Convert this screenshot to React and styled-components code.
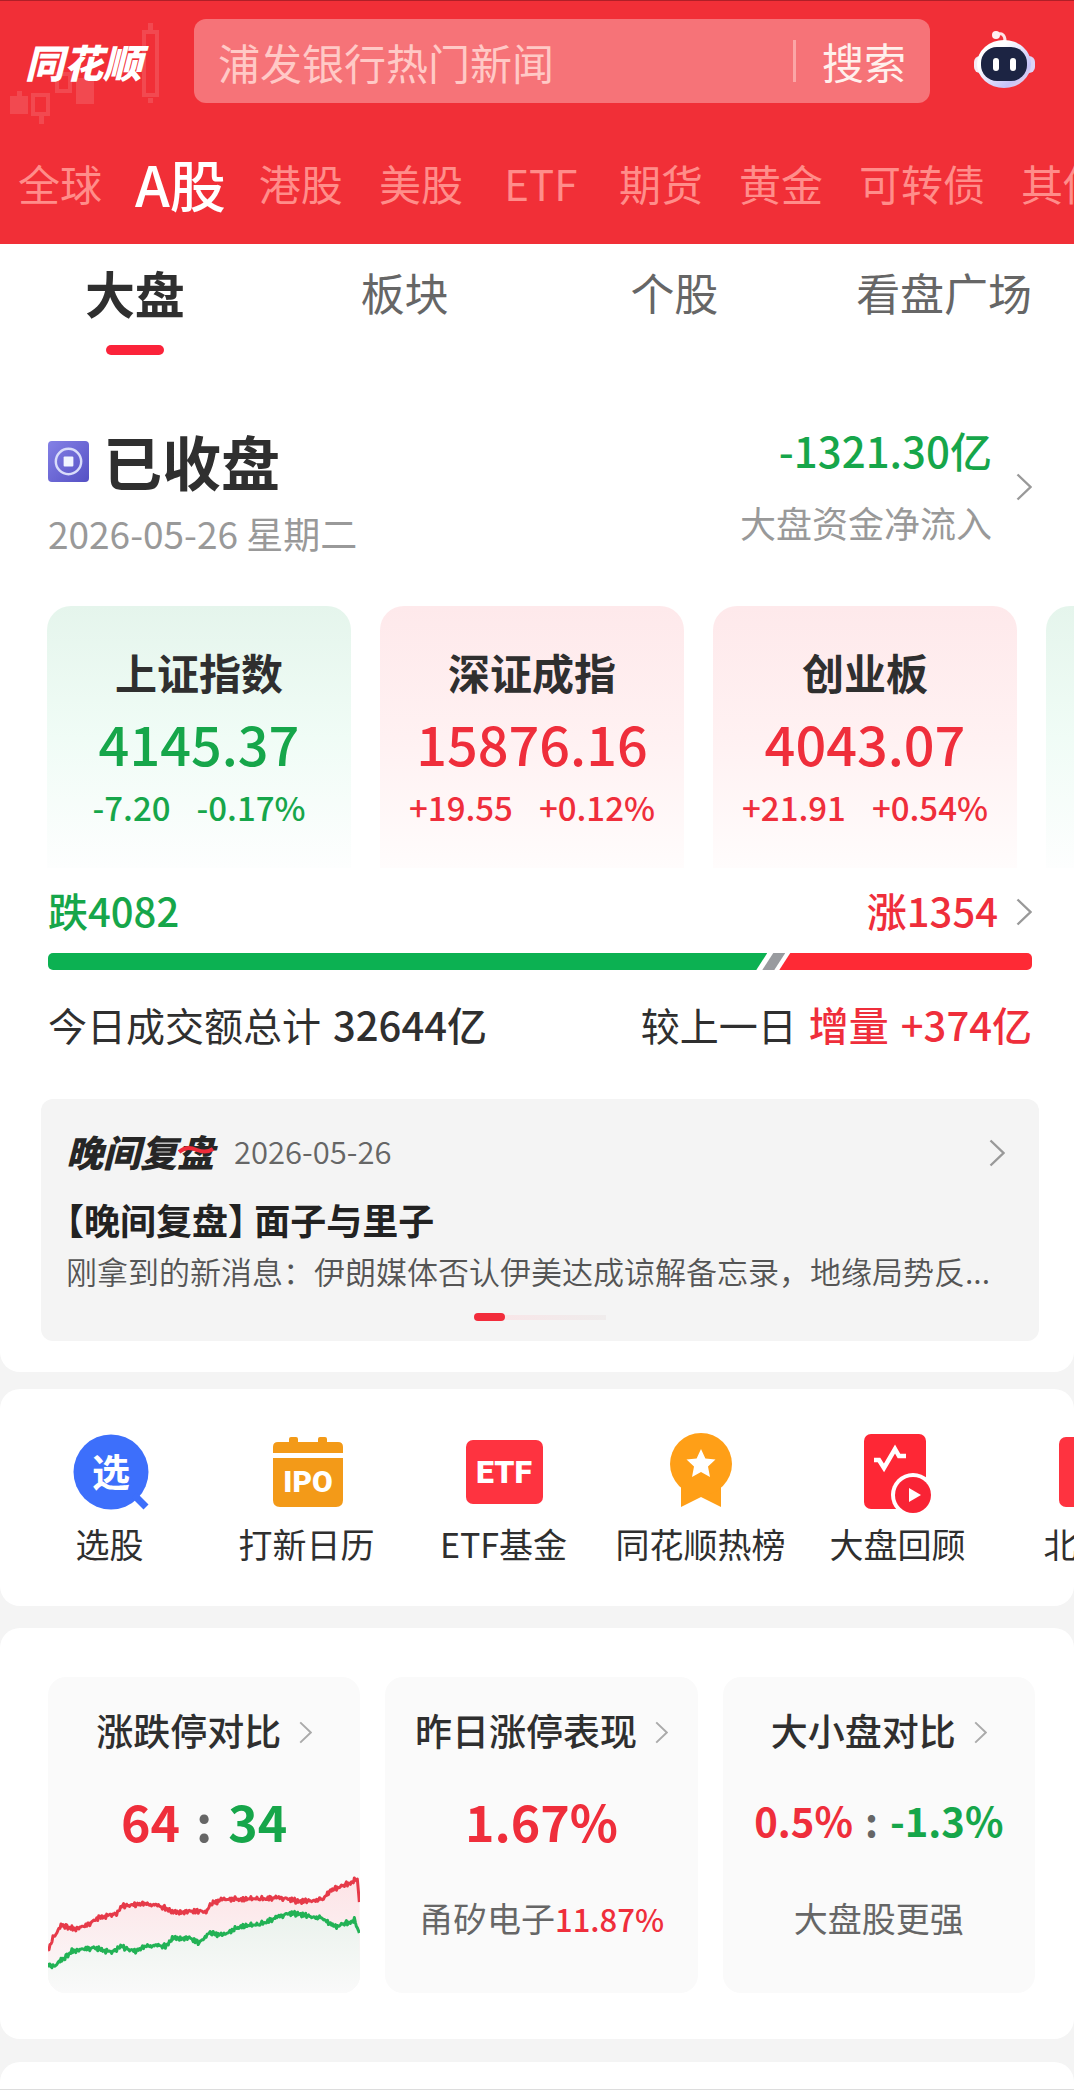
import React, {useState} from 'react';
import styled, {createGlobalStyle} from 'styled-components';

const RED = '#ef2e3b'
const GREEN = '#16a64a'

const GlobalStyle = createGlobalStyle`
    * {
        box-sizing: border-box;
    }
    body {
        margin: 0;
        background: #f4f4f4;
        color: #2f2f2f;
        font-family: "Noto Sans CJK SC", "Noto Sans", sans-serif;
        overflow-x: hidden;
    }
    button, input {
        font-family: inherit;
        border: 0;
        padding: 0;
        margin: 0;
        background: none;
        cursor: pointer;
    }
    a {
        color: inherit;
        text-decoration: none;
    }
    h1, h2, h3, p {
        margin: 0;
    }
    svg {
        display: block;
        flex: none;
    }
`

/* ---------- header ---------- */

const Header = styled.header`
    background: #f12f37;
    border-top: 1px solid #b01f27;
    padding-top: 18px;
`
const TopLine = styled.div`
    display: flex;
    align-items: center;
`
const Brand = styled.a`
    position: relative;
    flex: 0 0 194px;
    padding-left: 25px;
    font-size: 39px;
    line-height: 82px;
    font-weight: 900;
    font-style: italic;
    color: #fff;
`
const Candles = styled.svg`
    position: absolute;
    left: 0;
    top: 0;
`
const BrandName = styled.span`
    position: relative;
`
const SearchBox = styled.form`
    flex: 1;
    min-width: 0;
    height: 84px;
    display: flex;
    align-items: center;
    padding: 0 24px;
    border-radius: 12px;
    background: #f67378;
`
const SearchInput = styled.input`
    flex: 1;
    min-width: 0;
    height: 84px;
    outline: none;
    font-size: 42px;
    color: #fff;
    &::placeholder {
        color: #ffc9c6;
        opacity: 1;
    }
`
const SearchButton = styled.button`
    display: flex;
    align-items: center;
    gap: 26px;
    font-size: 42px;
    line-height: 56px;
    color: #fff0ec;
    &::before {
        content: "";
        width: 3px;
        height: 42px;
        background: #fba6a6;
    }
`
const RobotButton = styled.button`
    flex: 0 0 144px;
    padding-left: 40px;
`
const MarketNav = styled.nav`
    display: flex;
    align-items: center;
    gap: 36px;
    height: 141px;
    padding: 19px 0 0 18px;
    overflow: hidden;
`
const MarketLink = styled.a`
    flex: none;
    min-width: 84px;
    text-align: center;
    line-height: 72px;
    font-size: ${props => props.$active ? '56px' : '42px'};
    font-weight: ${props => props.$active ? 500 : 400};
    color: ${props => props.$active ? '#fff' : '#ff8d8a'};
    margin: ${props => props.$active ? '0 -3px' : '0'};
`

/* ---------- panels ---------- */

const Panel = styled.section`
    background: #fff;
    border-radius: ${props => props.$first ? '0 0 20px 20px' : '20px'};
    padding: ${props => props.$pad};
    margin-bottom: ${props => props.$gap};
    overflow: hidden;
`
const LastPanel = styled.div`
    height: 28px;
    background: #fff;
    border-radius: 20px 20px 0 0;
    border-bottom: 1px solid #dcdcdc;
`
const Tabs = styled.div`
    display: flex;
    margin-right: -5px;
    padding-top: 20px;
`
const Tab = styled.button`
    flex: 1;
    display: flex;
    flex-direction: column;
    align-items: center;
    gap: 25px;
    line-height: 56px;
    white-space: nowrap;
    font-size: ${props => props.$active ? '50px' : '44px'};
    font-weight: ${props => props.$active ? 700 : 400};
    color: ${props => props.$active ? '#2f2f2f' : '#666'};
    &::after {
        content: "";
        width: 58px;
        height: 10px;
        border-radius: 5px;
        background: ${props => props.$active ? '#fb233a' : 'transparent'};
    }
`
const Body = styled.div`
    padding: 0 42px 0 48px;
`
const StatusRow = styled.div`
    display: flex;
    justify-content: space-between;
    align-items: flex-start;
    margin-top: 71px;
`
const StatusTitle = styled.h1`
    display: flex;
    align-items: center;
    gap: 14px;
    font-size: 59px;
    line-height: 70px;
    font-weight: 700;
`
const Muted = styled.p`
    margin-top: ${props => props.$top};
    font-size: 36px;
    line-height: 44px;
    color: #999;
`
const Today = styled.p`
    margin-top: 15px;
    font-size: 37px;
    line-height: 44px;
    color: #999;
`
const FlowLink = styled.a`
    display: flex;
    align-items: center;
    gap: 24px;
    text-align: right;
`
const FlowValue = styled.p`
    font-size: 42px;
    line-height: 48px;
    font-weight: 500;
    color: ${GREEN};
`

/* ---------- index cards ---------- */

const IndexList = styled.div`
    display: flex;
    gap: 29px;
    padding: 51px 0 0 47px;
    overflow: hidden;
`
const IndexCard = styled.a`
    flex: 0 0 304px;
    height: 262px;
    padding-top: 38px;
    text-align: center;
    border-radius: 24px 24px 0 0;
    color: ${props => props.$up ? RED : GREEN};
    background: ${props => props.$up
        ? 'linear-gradient(#fee9eb, #fff1f2 50%, #fffcfc)'
        : 'linear-gradient(#e5f5ec, #f0fcf6 50%, #fdfefe)'};
`
const IndexName = styled.h2`
    font-size: 42px;
    line-height: 56px;
    font-weight: 700;
    color: #2f2f2f;
`
const IndexValue = styled.p`
    margin-top: 11px;
    font-size: 54px;
    line-height: 64px;
    font-weight: 500;
`
const IndexChange = styled.p`
    display: flex;
    justify-content: center;
    gap: 26px;
    margin-top: 12px;
    font-size: 33px;
    line-height: 40px;
    font-weight: 500;
`

/* ---------- up / down bar ---------- */

const Line = styled.div`
    display: flex;
    align-items: center;
    justify-content: space-between;
    margin-top: ${props => props.$top};
    font-size: 40px;
    line-height: 48px;
`
const Count = styled.a`
    display: flex;
    align-items: center;
    gap: 18px;
    font-weight: 500;
    color: ${props => props.$color};
`
const Bar = styled.div`
    display: flex;
    height: 17px;
    margin-top: 19px;
    border-radius: 5px;
    overflow: hidden;
`
const BarDown = styled.div`
    flex: ${props => props.$share};
    background: #0cb152;
    clip-path: polygon(0 0, 100% 0, calc(100% - 11px) 100%, 0 100%);
`
const BarFlat = styled.div`
    flex: 0 0 23px;
    margin: 0 -6px 0 -5px;
    background: #999b9f;
    clip-path: polygon(11px 0, 100% 0, calc(100% - 11px) 100%, 0 100%);
`
const BarUp = styled.div`
    flex: ${props => props.$share};
    background: #fe2a35;
    clip-path: polygon(11px 0, 100% 0, 100% 100%, 0 100%);
`
const Turnover = styled.p`
    display: flex;
    gap: 12px;
`
const TurnoverLabel = styled.span`
    font-size: 39px;
`
const Strong = styled.span`
    font-weight: 500;
    color: ${props => props.$color || 'inherit'};
`

/* ---------- news ---------- */

const News = styled.article`
    margin: 51px 35px 0 41px;
    padding: 28px 34px 20px 25px;
    border-radius: 12px;
    background: #f4f4f4;
`
const NewsHead = styled.div`
    display: flex;
    align-items: center;
    line-height: 48px;
`
const NewsBrand = styled.span`
    position: relative;
    font-size: 37px;
    font-weight: 900;
    font-style: italic;
    color: #262626;
`
const Wave = styled.svg`
    position: absolute;
    right: 0;
    top: 18px;
`
const NewsDate = styled.time`
    flex: 1;
    margin-left: 20px;
    font-size: 31px;
    font-weight: 350;
    color: #666;
`
const NewsTitle = styled.h2`
    margin-top: 20px;
    font-size: 36px;
    line-height: 48px;
    font-weight: 700;
    font-feature-settings: "halt";
    color: #222;
`
const NewsText = styled.p`
    margin-top: 6px;
    font-size: 31px;
    line-height: 44px;
    font-weight: 350;
    color: #555;
    white-space: nowrap;
    overflow: hidden;
`
const Pager = styled.div`
    display: flex;
    align-items: center;
    justify-content: center;
    margin-top: 20px;
    padding-left: 8px;
    &::before {
        content: "";
        width: 31px;
        height: 8px;
        border-radius: 4px;
        background: #f22c3b;
    }
    &::after {
        content: "";
        width: 101px;
        height: 5px;
        background: linear-gradient(90deg, #f8e6e8, #efecec);
    }
`

/* ---------- shortcuts ---------- */

const Shortcuts = styled.nav`
    display: flex;
    padding-left: 11px;
`
const Shortcut = styled.a`
    flex: 0 0 197px;
    display: flex;
    flex-direction: column;
    align-items: center;
    gap: 12px;
    font-size: 34px;
    line-height: 44px;
    white-space: nowrap;
`

/* ---------- stat cards ---------- */

const StatGrid = styled.div`
    display: grid;
    grid-template-columns: repeat(3, 1fr);
    gap: 25px;
    padding: 0 39px 0 48px;
`
const StatCard = styled.a`
    height: 316px;
    padding-top: 29px;
    border-radius: 18px;
    background: #fafafa;
    overflow: hidden;
`
const StatTitle = styled.h3`
    display: flex;
    align-items: center;
    justify-content: center;
    gap: 18px;
    font-size: 37px;
    line-height: 48px;
    font-weight: 500;
    white-space: nowrap;
`
const StatValue = styled.p`
    display: flex;
    justify-content: center;
    gap: ${props => props.$small ? '12px' : '16px'};
    margin-top: 34px;
    font-size: ${props => props.$small ? '40px' : '50px'};
    line-height: 64px;
    font-weight: 700;
    color: #666;
`
const StatNumber = styled.span`
    color: ${props => props.$color};
`
const StatNote = styled.p`
    margin-top: 44px;
    text-align: center;
    font-size: 34px;
    line-height: 44px;
    color: #666;
    white-space: nowrap;
`
const NoteValue = styled.span`
    font-size: 31px;
    font-weight: 500;
    color: ${RED};
`
const Chart = styled.svg`
    width: 100%;
    height: 121px;
    margin-top: 20px;
`
const ArrowIcon = styled.svg`
    margin-top: 4px;
`

const Arrow = ({width = 16, height = 28, color = '#999'}) => (
    <ArrowIcon width={width} height={height} viewBox="0 0 16 28" aria-hidden="true">
        <path d="M1.5 1.5 L14.5 14 L1.5 26.5" fill="none" stroke={color} strokeWidth="2.4" />
    </ArrowIcon>
)

const Robot = () => (
    <svg width="70" height="62" viewBox="0 0 70 62" aria-hidden="true">
        <defs>
            <linearGradient id="head" x1="0" y1="0" x2="1" y2="1">
                <stop offset="0.3" stopColor="#fff" />
                <stop offset="0.75" stopColor="#c5c3f8" />
                <stop offset="1" stopColor="#fbd5dc" />
            </linearGradient>
        </defs>
        <path d="M26 5 C32 2 35 5 35 11" fill="none" stroke="#fde3e6" strokeWidth="3" />
        <circle cx="26" cy="5" r="4" fill="#fff0f2" />
        <rect x="4" y="26" width="12" height="17" rx="6" fill="#f6eaf4" />
        <rect x="53" y="26" width="12" height="17" rx="6" fill="#dcd4f6" />
        <ellipse cx="34" cy="34" rx="27" ry="24" fill="url(#head)" />
        <rect x="11" y="17" width="46" height="34" rx="16" fill="#1c2443" />
        <rect x="23" y="28" width="6" height="13" rx="3" fill="#fff" />
        <rect x="40" y="28" width="6" height="13" rx="3" fill="#fff" />
    </svg>
)

const icons = {
    pick: (
        <>
            <circle cx="41" cy="42" r="37.500" fill="#3d6ffb" />
            <path d="M64 65 L76 77" stroke="#3d6ffb" strokeWidth="7" />
            <text x="41" y="56" fontSize="38" fontWeight="700" textAnchor="middle" fill="#fff">选</text>
        </>
    ),
    ipo: (
        <g fill="#f39a18">
            <path d="M6 23 V17 Q6 12 11 12 H22 V9 Q22 7 24 7 H29 Q31 7 31 9 V12 H51 V9 Q51 7 53 7 H58 Q60 7 60 9 V12 H71 Q76 12 76 17 V23 Z" />
            <path d="M6 28 H76 V70 Q76 77 69 77 H13 Q6 77 6 70 Z" />
            <text x="41" y="62" fontFamily="Roboto, sans-serif" fontSize="30" fontWeight="900" textAnchor="middle" fill="#fff">IPO</text>
        </g>
    ),
    etf: (
        <>
            <rect x="2" y="10" width="77" height="64" rx="7" fill="#fe3340" />
            <text x="40" y="53" fontFamily="Roboto, sans-serif" fontSize="32" fontWeight="900" textAnchor="middle" fill="#fff">ETF</text>
        </>
    ),
    hot: (
        <>
            <path d="M20 50 H60 V77 L40 67 L20 77 Z" fill="#ff9f17" />
            <circle cx="40" cy="34" r="31" fill="#ff9f17" />
            <path d="M40 19 L44.400 28.500 L54.500 29.500 L47 36.500 L49 47 L40 42 L31 47 L33 36.500 L25.500 29.500 L35.600 28.500 Z" fill="#fff" />
        </>
    ),
    review: (
        <>
            <rect x="6" y="4" width="62" height="75" rx="7" fill="#fe2735" />
            <path d="M16 30 H21 L26 38 L37 19 L41 26 H48" fill="none" stroke="#fff" strokeWidth="4.500" />
            <circle cx="55" cy="65" r="22" fill="#fff" />
            <circle cx="55" cy="65" r="18" fill="#f92335" />
            <path d="M51 58 L63 65 L51 72 Z" fill="#fff" />
        </>
    ),
    north: (
        <>
            <rect x="4" y="7" width="72" height="70" rx="7" fill="#fe3340" />
            <circle cx="38" cy="41" r="16" fill="none" stroke="#fff" strokeWidth="5" />
        </>
    ),
}

const markets = ['全球', 'A股', '港股', '美股', 'ETF', '期货', '黄金', '可转债', '其他']
const tabs = ['大盘', '板块', '个股', '看盘广场']
const indexes = [
    {name: '上证指数', value: '4145.37', change: '-7.20', rate: '-0.17%', up: false},
    {name: '深证成指', value: '15876.16', change: '+19.55', rate: '+0.12%', up: true},
    {name: '创业板', value: '4043.07', change: '+21.91', rate: '+0.54%', up: true},
    {name: '', value: '', change: '', rate: '', up: false},
]
const shortcuts = [
    {icon: 'pick', name: '选股'},
    {icon: 'ipo', name: '打新日历'},
    {icon: 'etf', name: 'ETF基金'},
    {icon: 'hot', name: '同花顺热榜'},
    {icon: 'review', name: '大盘回顾'},
    {icon: 'north', name: '北交所'},
]

const upLine = [[0, 78], [5, 66], [14, 53], [27, 57], [38, 54], [51, 46], [70, 41], [75, 34], [91, 32], [106, 33],
    [122, 37], [125, 40], [159, 39], [164, 32], [176, 27], [211, 27], [228, 26], [243, 27], [252, 30], [276, 27],
    [283, 19], [296, 14], [311, 7], [313, 30]]
const downLine = [[0, 91], [5, 95], [14, 88], [24, 79], [46, 76], [63, 80], [74, 75], [87, 79], [101, 74], [118, 74],
    [125, 66], [142, 66], [152, 71], [161, 61], [175, 63], [194, 54], [211, 53], [224, 48], [243, 41], [255, 43],
    [276, 46], [289, 55], [308, 48], [313, 61]]

// fill in the minute ticks between the key points
const ticks = (points) => {
    const out = []
    for (let i = 0; i < points.length - 1; i++) {
        const [x1, y1] = points[i]
        const [x2, y2] = points[i + 1]
        for (let x = x1; x < x2; x += 1) {
            const noise = Math.sin(x * 2.3) * 1.2 + Math.sin(x * x * 1.7) * 1.3
            out.push(`${x},${(y1 + (y2 - y1) * (x - x1) / (x2 - x1) + noise).toFixed(1)}`)
        }
    }
    out.push(points[points.length - 1].join(','))
    return out.join(' ')
}

const TrendChart = () => (
    <Chart viewBox="0 0 314 121" preserveAspectRatio="none" aria-hidden="true">
        <defs>
            <linearGradient id="upFill" x1="0" y1="0" x2="0" y2="1">
                <stop offset="0" stopColor="#fde3e6" />
                <stop offset="1" stopColor="#fafafa" />
            </linearGradient>
            <linearGradient id="downFill" x1="0" y1="0" x2="0" y2="1">
                <stop offset="0" stopColor="#eaf2ec" />
                <stop offset="1" stopColor="#fafafa" />
            </linearGradient>
        </defs>
        <polygon points={`0,121 ${ticks(upLine)} 314,121`} fill="url(#upFill)" />
        <polygon points={`0,121 ${ticks(downLine)} 314,121`} fill="url(#downFill)" />
        <polyline points={ticks(upLine)} fill="none" stroke="#e63a49" strokeWidth="3" strokeLinejoin="round" />
        <polyline points={ticks(downLine)} fill="none" stroke="#22b255" strokeWidth="3" strokeLinejoin="round" />
    </Chart>
)

const App = () => {
    const [market, setMarket] = useState('A股')
    const [tab, setTab] = useState('大盘')

    return (
        <>
            <GlobalStyle />
            <Header>
                <TopLine>
                    <Brand href="#">
                        <Candles width="170" height="110" viewBox="0 0 170 110" aria-hidden="true">
                            <g fill="#fff" fillOpacity="0.13">
                                <rect x="10" y="76" width="18" height="18" />
                                <rect x="17" y="71" width="5" height="5" />
                                <rect x="76" y="58" width="18" height="26" />
                                <rect x="39" y="96" width="5" height="8" />
                                <rect x="148" y="3" width="5" height="7" />
                                <rect x="148" y="78" width="5" height="5" />
                            </g>
                            <g fill="none" stroke="#fff" strokeOpacity="0.13" strokeWidth="4">
                                <rect x="33" y="75" width="15" height="19" />
                                <rect x="57" y="54" width="13" height="17" />
                                <rect x="144" y="12" width="13" height="63" />
                            </g>
                        </Candles>
                        <BrandName>同花顺</BrandName>
                    </Brand>
                    <SearchBox onSubmit={e => e.preventDefault()}>
                        <SearchInput type="text" aria-label="搜索" placeholder="浦发银行热门新闻" />
                        <SearchButton type="submit">搜索</SearchButton>
                    </SearchBox>
                    <RobotButton aria-label="智能助手"><Robot /></RobotButton>
                </TopLine>
                <MarketNav>
                    {markets.map(name => (
                        <MarketLink key={name} href="#" $active={name === market} onClick={() => setMarket(name)}>{name}</MarketLink>
                    ))}
                </MarketNav>
            </Header>

            <Panel $first $pad="0 0 31px" $gap="17px">
                <Tabs>
                    {tabs.map(name => (
                        <Tab key={name} $active={name === tab} onClick={() => setTab(name)}>{name}</Tab>
                    ))}
                </Tabs>
                <Body>
                    <StatusRow>
                        <div>
                            <StatusTitle>
                                <svg width="41" height="41" viewBox="0 0 42 42" aria-hidden="true">
                                    <defs>
                                        <linearGradient id="stop" x1="0" y1="0" x2="1" y2="1">
                                            <stop offset="0" stopColor="#8481e6" />
                                            <stop offset="1" stopColor="#5550c4" />
                                        </linearGradient>
                                    </defs>
                                    <rect width="42" height="42" rx="4" fill="url(#stop)" />
                                    <circle cx="21" cy="21" r="13" fill="none" stroke="#d9dcfa" strokeWidth="2.500" />
                                    <rect x="16" y="16" width="10" height="10" rx="1" fill="#f1f5ff" />
                                </svg>
                                已收盘
                            </StatusTitle>
                            <Today>2026-05-26 星期二</Today>
                        </div>
                        <FlowLink href="#">
                            <div>
                                <FlowValue>-1321.30亿</FlowValue>
                                <Muted $top="26px">大盘资金净流入</Muted>
                            </div>
                            <Arrow />
                        </FlowLink>
                    </StatusRow>
                </Body>
                <IndexList>
                    {indexes.map(item => (
                        <IndexCard key={item.name} href="#" $up={item.up}>
                            <IndexName>{item.name}</IndexName>
                            <IndexValue>{item.value}</IndexValue>
                            <IndexChange>
                                <span>{item.change}</span>
                                <span>{item.rate}</span>
                            </IndexChange>
                        </IndexCard>
                    ))}
                </IndexList>
                <Body>
                    <Line $top="18px">
                        <Count href="#" $color={GREEN}>跌4082</Count>
                        <Count href="#" $color={RED}>涨1354<Arrow /></Count>
                    </Line>
                    <Bar>
                        <BarDown $share={74} />
                        <BarFlat />
                        <BarUp $share={26} />
                    </Bar>
                    <Line $top="30px">
                        <Turnover>
                            <TurnoverLabel>今日成交额总计</TurnoverLabel>
                            <Strong>32644亿</Strong>
                        </Turnover>
                        <Turnover>
                            <TurnoverLabel>较上一日</TurnoverLabel>
                            <Strong $color={RED}>增量</Strong>
                            <Strong $color={RED}>+374亿</Strong>
                        </Turnover>
                    </Line>
                </Body>
                <News>
                    <NewsHead>
                        <NewsBrand>
                            晚间复盘
                            <Wave width="36" height="10" viewBox="0 0 36 10" aria-hidden="true">
                                <path d="M1 7 C8 1 14 3 19 5 S29 8 35 4" fill="none" stroke="#ee2c3a" strokeWidth="4" />
                            </Wave>
                        </NewsBrand>
                        <NewsDate dateTime="2026-05-26">2026-05-26</NewsDate>
                        <Arrow />
                    </NewsHead>
                    <NewsTitle>【晚间复盘】 面子与里子</NewsTitle>
                    <NewsText>刚拿到的新消息：伊朗媒体否认伊美达成谅解备忘录，地缘局势反...</NewsText>
                    <Pager />
                </News>
            </Panel>

            <Panel $pad="41px 0 40px" $gap="22px">
                <Shortcuts>
                    {shortcuts.map(item => (
                        <Shortcut key={item.name} href="#">
                            <svg width="80" height="80" viewBox="0 0 80 80" overflow="visible" aria-hidden="true">
                                {icons[item.icon]}
                            </svg>
                            {item.name}
                        </Shortcut>
                    ))}
                </Shortcuts>
            </Panel>

            <Panel $pad="49px 0 46px" $gap="23px">
                <StatGrid>
                    <StatCard href="#">
                        <StatTitle>涨跌停对比<Arrow width={13} height={23} color="#aaa" /></StatTitle>
                        <StatValue>
                            <StatNumber $color={RED}>64</StatNumber>
                            <span>:</span>
                            <StatNumber $color={GREEN}>34</StatNumber>
                        </StatValue>
                        <TrendChart />
                    </StatCard>
                    <StatCard href="#">
                        <StatTitle>昨日涨停表现<Arrow width={13} height={23} color="#aaa" /></StatTitle>
                        <StatValue><StatNumber $color={RED}>1.67%</StatNumber></StatValue>
                        <StatNote>甬矽电子<NoteValue>11.87%</NoteValue></StatNote>
                    </StatCard>
                    <StatCard href="#">
                        <StatTitle>大小盘对比<Arrow width={13} height={23} color="#aaa" /></StatTitle>
                        <StatValue $small>
                            <StatNumber $color={RED}>0.5%</StatNumber>
                            <span>:</span>
                            <StatNumber $color={GREEN}>-1.3%</StatNumber>
                        </StatValue>
                        <StatNote>大盘股更强</StatNote>
                    </StatCard>
                </StatGrid>
            </Panel>
            <LastPanel />
        </>
    );
};

export default App;
